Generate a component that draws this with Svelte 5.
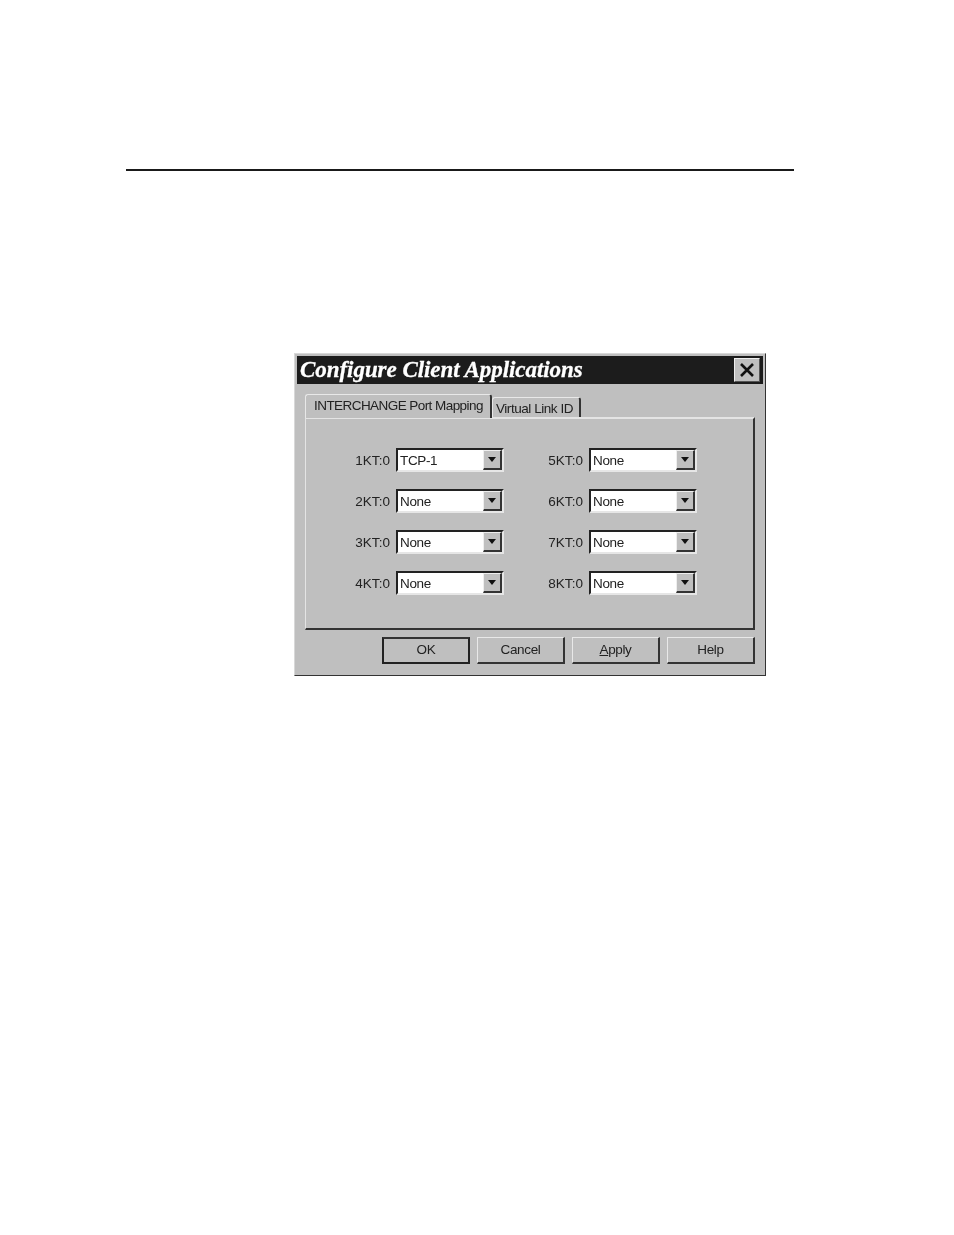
<script lang="ts">
	const columns = [
		[
			{ label: '1KT:0', value: 'TCP-1' },
			{ label: '2KT:0', value: 'None' },
			{ label: '3KT:0', value: 'None' },
			{ label: '4KT:0', value: 'None' }
		],
		[
			{ label: '5KT:0', value: 'None' },
			{ label: '6KT:0', value: 'None' },
			{ label: '7KT:0', value: 'None' },
			{ label: '8KT:0', value: 'None' }
		]
	];
</script>

<div class="page">
	<div class="rule"></div>

	<div class="dialog">
		<div class="titlebar">
			<span class="title">Configure Client Applications</span>
			<button class="close" aria-label="Close">
				<svg width="16" height="16" viewBox="0 0 16 16">
					<path d="M2 2 L14 14 M14 2 L2 14" stroke="#111" stroke-width="2.6" fill="none" />
				</svg>
			</button>
		</div>

		<div class="tabs">
			<div class="tab active">INTERCHANGE Port Mapping</div>
			<div class="tab">Virtual Link ID</div>
		</div>

		<div class="panel">
			{#each columns as col}
				<div class="column">
					{#each col as row}
						<div class="row">
							<span class="label">{row.label}</span>
							<div class="combo">
								<span class="value">{row.value}</span>
								<span class="arrow"><i></i></span>
							</div>
						</div>
					{/each}
				</div>
			{/each}
		</div>

		<div class="buttons">
			<button class="btn default">OK</button>
			<button class="btn">Cancel</button>
			<button class="btn"><u>A</u>pply</button>
			<button class="btn">Help</button>
		</div>
	</div>
</div>

<style>
	:global(body) {
		background: #fff;
	}
	.page {
		height: 1235px;
		padding-top: 169px;
		box-sizing: border-box;
		font-family: 'Liberation Sans', Arial, sans-serif;
		font-size: 13.5px;
		letter-spacing: -0.35px;
		color: #222;
	}
	.rule {
		width: 668px;
		height: 2px;
		margin-left: 126px;
		background: #1a1a1a;
	}
	.dialog {
		width: 472px;
		height: 323px;
		margin: 182px 0 0 294px;
		box-sizing: border-box;
		padding: 2px;
		background: #bfbfbf;
		border: 1px solid;
		border-color: #d8d8d8 #333 #333 #d8d8d8;
		filter: blur(0.4px);
	}
	.titlebar {
		height: 28px;
		background: #1c1c1c;
		display: flex;
		align-items: center;
		justify-content: space-between;
		padding: 0 3px;
	}
	.title {
		font-family: 'Liberation Serif', 'Times New Roman', serif;
		font-weight: bold;
		font-style: italic;
		font-size: 23px;
		letter-spacing: -0.05px;
		color: #fff;
		white-space: nowrap;
		-webkit-text-stroke: 0.3px #fff;
	}
	.close {
		width: 26px;
		height: 24px;
		padding: 0;
		display: flex;
		align-items: center;
		justify-content: center;
		background: #bfbfbf;
		border: 1px solid;
		border-color: #eee #555 #555 #eee;
	}
	.tabs {
		display: flex;
		align-items: flex-end;
		height: 33px;
		margin-left: 8px;
		position: relative;
		z-index: 1;
	}
	.tab {
		box-sizing: border-box;
		height: 20px;
		width: 89px;
		padding-left: 3px;
		line-height: 21px;
		letter-spacing: -0.45px;
		white-space: nowrap;
		background: #bfbfbf;
		border: 1px solid;
		border-width: 1px 2px 0 1px;
		border-color: #e8e8e8 #333 #bfbfbf #e8e8e8;
		border-radius: 3px 3px 0 0;
	}
	.tab.active {
		width: 187px;
		height: 24px;
		margin-bottom: -1px;
		padding-left: 8px;
		line-height: 21px;
		letter-spacing: -0.56px;
	}
	.panel {
		box-sizing: border-box;
		height: 213px;
		width: 450px;
		margin-left: 8px;
		padding-top: 29px;
		display: flex;
		background: #bfbfbf;
		border: 1px solid;
		border-width: 2px 2px 2px 1px;
		border-color: #e4e4e4 #333 #333 #e4e4e4;
	}
	.column {
		width: 193px;
		display: flex;
		flex-direction: column;
		gap: 17px;
	}
	.column:first-child {
		margin-left: 47px;
	}
	.row {
		display: flex;
		align-items: center;
		gap: 6px;
		height: 24px;
	}
	.label {
		width: 37px;
		text-align: right;
		white-space: nowrap;
		letter-spacing: 0.05px;
	}
	.combo {
		box-sizing: border-box;
		width: 108px;
		height: 24px;
		display: flex;
		align-items: center;
		justify-content: space-between;
		background: #fff;
		border: 2px solid;
		border-color: #222 #e6e6e6 #e6e6e6 #222;
	}
	.value {
		padding-left: 2px;
	}
	.arrow {
		width: 19px;
		height: 20px;
		display: flex;
		align-items: center;
		justify-content: center;
		background: #bfbfbf;
		border: 1px solid;
		border-width: 1px 2px 2px 1px;
		border-color: #eee #333 #333 #eee;
		box-sizing: border-box;
	}
	.arrow i {
		width: 0;
		height: 0;
		border-left: 4px solid transparent;
		border-right: 4px solid transparent;
		border-top: 5px solid #111;
	}
	.buttons {
		display: flex;
		justify-content: flex-end;
		gap: 7px;
		margin-top: 7px;
		padding-right: 8px;
	}
	.btn {
		box-sizing: border-box;
		width: 88px;
		height: 27px;
		padding: 0 0 2px;
		font: inherit;
		letter-spacing: inherit;
		color: inherit;
		background: #bfbfbf;
		border: 1px solid;
		border-width: 1px 2px 2px 1px;
		border-color: #e8e8e8 #333 #333 #e8e8e8;
	}
	.btn.default {
		border: 2px solid #222;
		border-top-color: #333;
	}
</style>
